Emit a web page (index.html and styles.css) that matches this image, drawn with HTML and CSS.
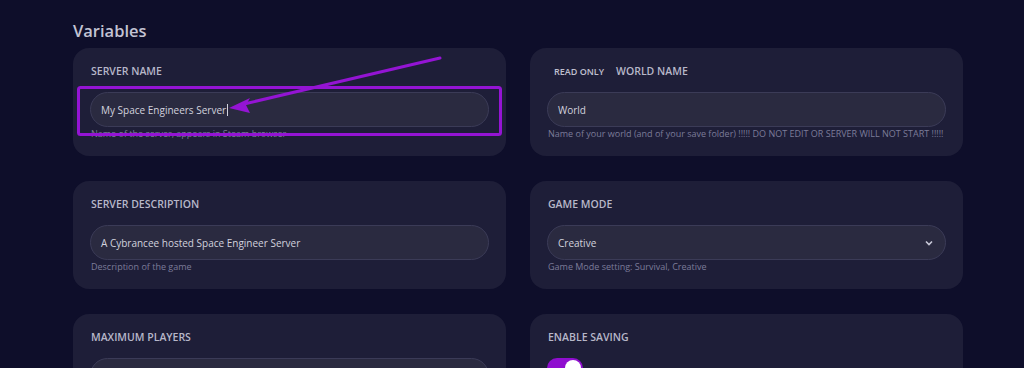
FILE: index.html
```html
<!DOCTYPE html>
<html lang="en">
<head>
    <meta charset="UTF-8">
    <meta name="viewport" content="width=device-width, initial-scale=1.0">
    <title>Variables</title>
    <link rel="stylesheet" href="styles.css">
</head>
<body>
    <div class="page">
        <h1>Variables</h1>
        <div class="grid">
            <div class="card">
                <div class="label">SERVER NAME</div>
                <div class="field">My Space Engineers Server<span class="caret"></span></div>
                <div class="help">Name of the server, appears in Steam browser</div>
            </div>
            <div class="card">
                <div class="label"><span class="badge">READ ONLY</span>WORLD NAME</div>
                <div class="field">World</div>
                <div class="help">Name of your world (and of your save folder) !!!!! DO NOT EDIT OR SERVER WILL NOT START !!!!!</div>
            </div>
            <div class="card">
                <div class="label">SERVER DESCRIPTION</div>
                <div class="field">A Cybrancee hosted Space Engineer Server</div>
                <div class="help">Description of the game</div>
            </div>
            <div class="card">
                <div class="label">GAME MODE</div>
                <div class="field select">
                    <span>Creative</span>
                    <svg width="8" height="6" viewBox="0 0 8 6"><path d="M1 1.5 L4 4.5 L7 1.5" fill="none" stroke="#c9c9d8" stroke-width="1.6"/></svg>
                </div>
                <div class="help">Game Mode setting: Survival, Creative</div>
            </div>
            <div class="card">
                <div class="label">MAXIMUM PLAYERS</div>
                <div class="field"></div>
            </div>
            <div class="card">
                <div class="label">ENABLE SAVING</div>
                <div class="toggle"><span class="knob"></span></div>
            </div>
        </div>

        <!-- annotation drawn over the form -->
        <svg class="annotation" width="1024" height="368" viewBox="0 0 1024 368">
            <rect x="78.5" y="87.5" width="422" height="47" rx="2" fill="none" stroke="#9414d4" stroke-width="3"/>
            <line x1="440" y1="58" x2="244" y2="104" stroke="#9414d4" stroke-width="3" stroke-linecap="round"/>
            <polygon points="229,108 250,98 246,105 250,113" fill="#9414d4"/>
        </svg>
    </div>
</body>
</html>
```

FILE: styles.css
```css
body {
    margin: 0;
    background: #0e0e2a;
    font-family: "Open Sans", "Noto Sans", sans-serif;
    color: #c8c8d6;
    overflow: hidden;
}
.page {
    position: relative;
    padding: 0 61px 0 73px;
    height: 368px;
    overflow: hidden;
}
h1 {
    margin: 0;
    padding-top: 18px;
    font-size: 16.5px;
    line-height: 25px;
    font-weight: 600;
    color: #c3c3d3;
}
.grid {
    display: grid;
    grid-template-columns: 433px 433px;
    column-gap: 24px;
    row-gap: 25px;
    margin-top: 5px;
}
.card {
    background: #1e1e38;
    border-radius: 16px;
    height: 108px;
    box-sizing: border-box;
    padding: 15px 17px 0 17px;
}
.label {
    display: flex;
    align-items: center;
    height: 16px;
    font-size: 10.5px;
    font-weight: 600;
    color: #b7b7c9;
    padding-left: 1px;
    margin-bottom: 13px;
}
.badge {
    font-size: 9px;
    padding: 0 12px 0 6px;
    color: #c0c0d0;
}
.field {
    height: 35px;
    box-sizing: border-box;
    border: 1px solid #3b3b57;
    border-radius: 18px;
    background: #2a2a40;
    padding: 0 10px;
    display: flex;
    align-items: center;
    font-size: 10px;
    color: #d2d2de;
}
.caret {
    display: inline-block;
    width: 1px;
    height: 12px;
    background: #d2d2de;
    margin-left: 1px;
}
.select {
    justify-content: space-between;
    padding-right: 12px;
}
.help {
    font-size: 9px;
    line-height: 12px;
    margin-top: 1px;
    padding-left: 1px;
    color: #7c7c98;
}
.toggle {
    width: 36px;
    height: 20px;
    border-radius: 10px;
    background: #8f0ecf;
    display: flex;
    align-items: center;
    justify-content: flex-end;
    padding: 0 2px;
    box-sizing: border-box;
}
.knob {
    width: 16px;
    height: 16px;
    border-radius: 50%;
    background: #ffffff;
}
.annotation {
    position: absolute;
    left: 0;
    top: 0;
    pointer-events: none;
}
```
